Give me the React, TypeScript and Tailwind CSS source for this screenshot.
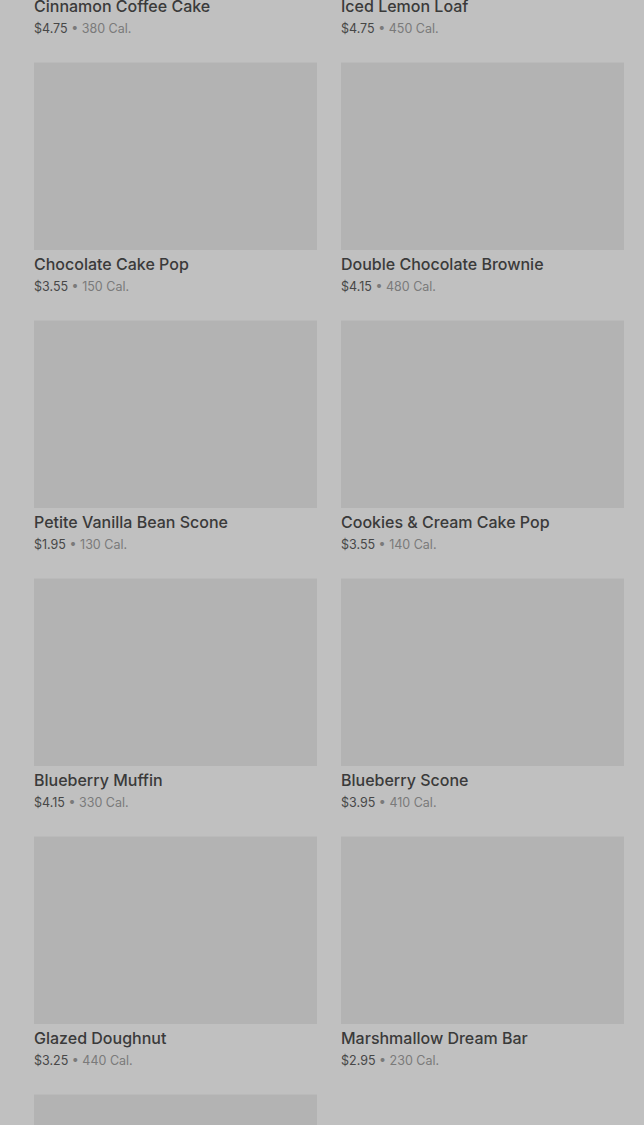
import React from 'react';

interface Item {
  name: string;
  price: string;
  cal: number;
}

const items: Item[] = [
  { name: 'Cinnamon Coffee Cake', price: '$4.75', cal: 380 },
  { name: 'Iced Lemon Loaf', price: '$4.75', cal: 450 },
  { name: 'Chocolate Cake Pop', price: '$3.55', cal: 150 },
  { name: 'Double Chocolate Brownie', price: '$4.15', cal: 480 },
  { name: 'Petite Vanilla Bean Scone', price: '$1.95', cal: 130 },
  { name: 'Cookies & Cream Cake Pop', price: '$3.55', cal: 140 },
  { name: 'Blueberry Muffin', price: '$4.15', cal: 330 },
  { name: 'Blueberry Scone', price: '$3.95', cal: 410 },
  { name: 'Glazed Doughnut', price: '$3.25', cal: 440 },
  { name: 'Marshmallow Dream Bar', price: '$2.95', cal: 230 },
  { name: 'Butter Croissant', price: '$3.25', cal: 260 },
];

const ProductCard: React.FC<{ item: Item }> = ({ item }) => {
  return (
    <div className="flex flex-col">
      {/* image placeholder */}
      <div className="h-[188px] bg-[#b3b3b3] border-t border-[#bababa]" />
      <div className="mt-[4px] text-[16px] leading-[20px] font-medium text-[#3a3a3a]">
        {item.name}
      </div>
      <div className="mt-[4px] text-[12.5px] leading-[18px]">
        <span className="text-[#474747]">{item.price}</span>
        <span className="text-[#7a7a7a]"> • {item.cal} Cal.</span>
      </div>
    </div>
  );
};

export default function App() {
  return (
    <div
      className="h-[1125px] overflow-hidden bg-[#c0c0c0]"
      style={{ fontFamily: 'Inter, "Noto Sans", sans-serif' }}
    >
      <div className="-mt-[196px] pl-[34px] pr-[20px] grid grid-cols-2 gap-x-[24px] gap-y-[24px]">
        {items.map((item) => (
          <ProductCard key={item.name} item={item} />
        ))}
      </div>
    </div>
  );
}
